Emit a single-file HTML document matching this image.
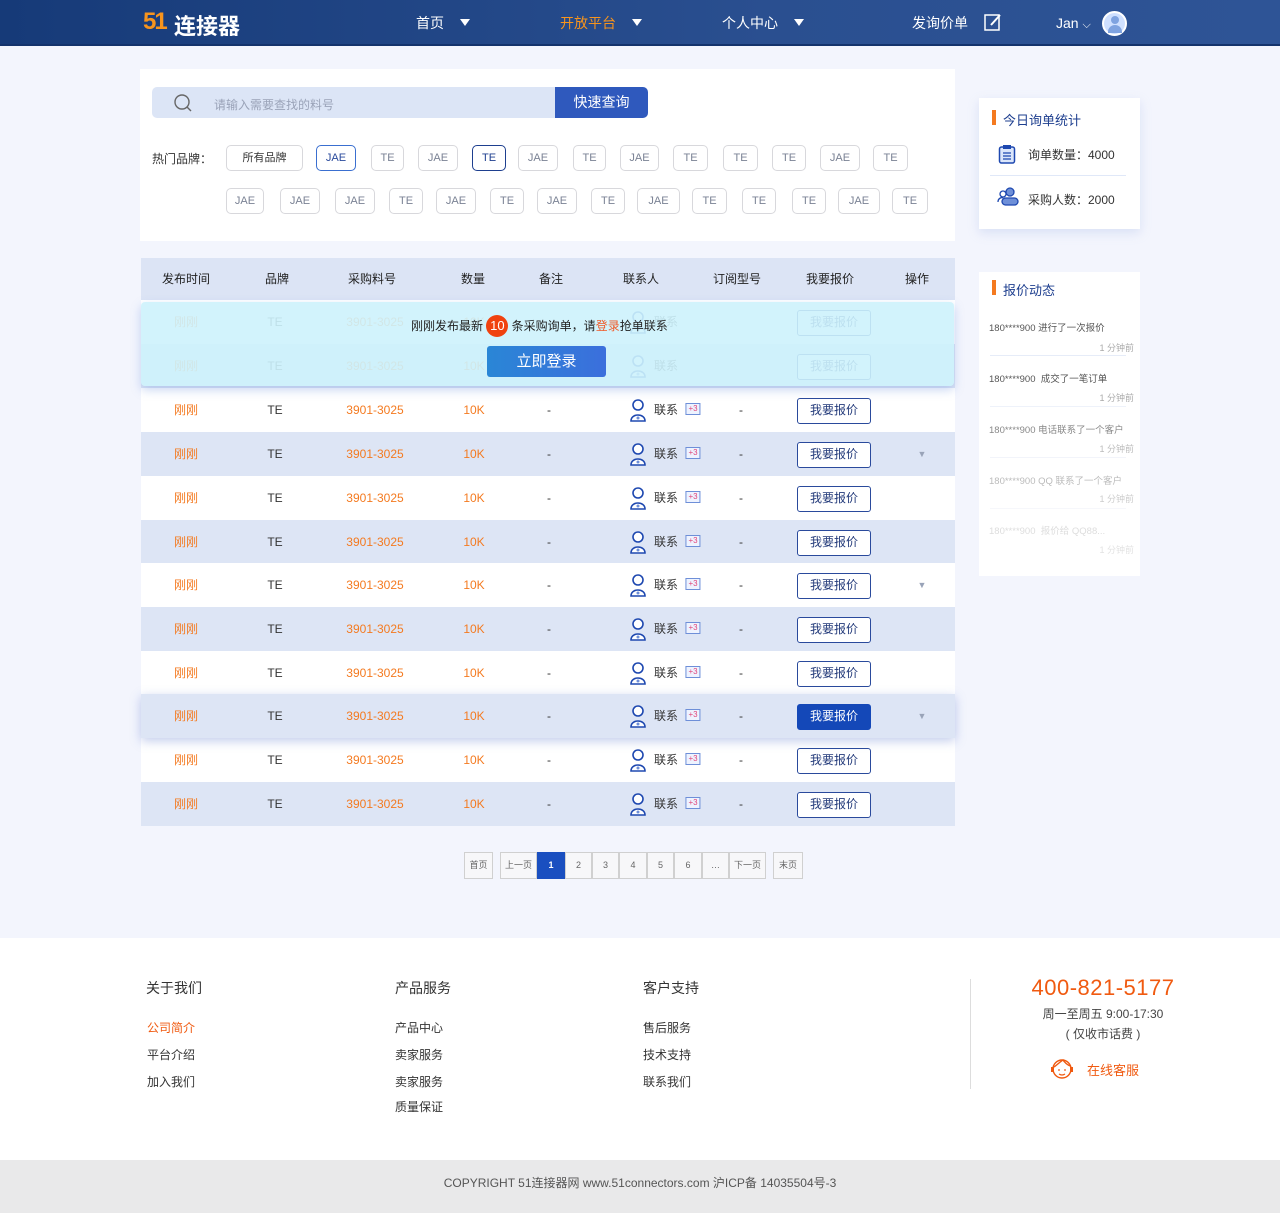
<!DOCTYPE html>
<html><head><meta charset="utf-8"><style>
*{margin:0;padding:0;box-sizing:border-box}
body{width:1280px;height:1213px;background:#f3f5fd;font-family:"Liberation Sans","Noto Sans CJK SC",sans-serif;position:relative;overflow:hidden;font-size:12px;color:#333}
.a{position:absolute}
.hdr{left:0;top:0;width:1280px;height:46px;background:linear-gradient(90deg,#163a78,#2a4f90 60%,#2e5496);border-bottom:2px solid #14336c}
.nav{color:#fff;font-size:14px;top:13px}
.tri{display:inline-block;width:0;height:0;border-left:5px solid transparent;border-right:5px solid transparent;border-top:7px solid #fff;margin-left:16px;vertical-align:2px}
.card{background:#fff}
.tag{position:absolute;height:26px;border:1px solid #d8d8dc;border-radius:5px;font-size:11px;color:#7a8294;text-align:center;line-height:24px;background:#fff}
.row{position:absolute;left:141px;width:814px;height:44px;font-size:12px}
.row span{position:absolute;top:0;line-height:44px;transform:translateX(-50%)}
.o{color:#f47a20}
.btn{position:absolute;left:656px;top:10px;width:74px;height:26px;border:1.5px solid #2a4a9c;border-radius:3px;color:#233a7a;text-align:center;line-height:23px;font-size:12px;background:#fff}
.pg{position:absolute;top:852px;height:27px;border:1px solid #d0d0d0;background:#f7f7f9;font-size:9px;color:#666;text-align:center;line-height:25px}
.fh{font-size:14px;color:#333;top:978px}
.fl{font-size:12px;color:#333}
.dyn{position:absolute;left:989px;width:145px;font-size:9.5px;color:#555;white-space:nowrap}
</style></head><body>
<div class="a hdr"></div>
<div class="a" style="left:143px;top:8px;font-size:24px;font-weight:bold;color:#f7941d;letter-spacing:-2px">51</div>
<div class="a" style="left:174px;top:9px;font-size:22px;color:#fff;font-weight:bold">连接器</div>
<div class="a nav" style="left:416px">首页<span class="tri"></span></div>
<div class="a nav" style="left:560px;color:#f7941d">开放平台<span class="tri"></span></div>
<div class="a nav" style="left:722px">个人中心<span class="tri"></span></div>
<div class="a nav" style="left:912px">发询价单</div>
<svg class="a" style="left:984px;top:13px" width="18" height="18" viewBox="0 0 18 18"><rect x="1" y="2" width="14" height="15" fill="none" stroke="#fff" stroke-width="1.5"/><path d="M7 12 L16 2" stroke="#fff" stroke-width="2"/></svg>
<div class="a nav" style="left:1056px;top:15px">Jan <span style="font-size:11px">⌵</span></div>
<div class="a" style="left:1102px;top:11px;width:25px;height:25px;border-radius:50%;background:#cfe0ff;border:2px solid #fff"><div class="a" style="left:7px;top:3px;width:8px;height:8px;border-radius:50%;background:#7fa3e0"></div><div class="a" style="left:4px;top:12px;width:14px;height:8px;border-radius:7px 7px 0 0;background:#7fa3e0"></div></div>

<div class="a card" style="left:140px;top:69px;width:815px;height:172px"></div>
<div class="a" style="left:152px;top:87px;width:404px;height:31px;background:#dce5f6;border-radius:5px 0 0 5px"></div>
<svg class="a" style="left:173px;top:93px" width="20" height="20" viewBox="0 0 20 20"><circle cx="9" cy="9" r="7" fill="none" stroke="#666" stroke-width="1.4"/><path d="M14 14 L18 18" stroke="#666" stroke-width="1.4"/></svg>
<div class="a" style="left:214px;top:96px;color:#9aa3b8;font-size:12px">请输入需要查找的料号</div>
<div class="a" style="left:555px;top:87px;width:93px;height:31px;background:#2f59bd;border-radius:0 5px 5px 0;color:#fff;font-size:14px;text-align:center;line-height:31px">快速查询</div>
<div class="a" style="left:152px;top:150px;font-size:12px">热门品牌：</div>
<div class="tag" style="left:226px;top:145px;width:77px;color:#333">所有品牌</div>
<div class="tag" style="left:316px;top:145px;width:40px;border-color:#3a6fd0;color:#2a4a9c">JAE</div>
<div class="tag" style="left:371px;top:145px;width:33px">TE</div>
<div class="tag" style="left:418px;top:145px;width:40px">JAE</div>
<div class="tag" style="left:472px;top:145px;width:34px;border-color:#1e3f8f;color:#1e3f8f">TE</div>
<div class="tag" style="left:518px;top:145px;width:40px">JAE</div>
<div class="tag" style="left:573px;top:145px;width:33px">TE</div>
<div class="tag" style="left:620px;top:145px;width:39px">JAE</div>
<div class="tag" style="left:673px;top:145px;width:35px">TE</div>
<div class="tag" style="left:723px;top:145px;width:35px">TE</div>
<div class="tag" style="left:772px;top:145px;width:34px">TE</div>
<div class="tag" style="left:820px;top:145px;width:40px">JAE</div>
<div class="tag" style="left:873px;top:145px;width:35px">TE</div>
<div class="tag" style="left:226px;top:188px;width:38px">JAE</div>
<div class="tag" style="left:280px;top:188px;width:40px">JAE</div>
<div class="tag" style="left:335px;top:188px;width:40px">JAE</div>
<div class="tag" style="left:389px;top:188px;width:34px">TE</div>
<div class="tag" style="left:436px;top:188px;width:40px">JAE</div>
<div class="tag" style="left:490px;top:188px;width:34px">TE</div>
<div class="tag" style="left:537px;top:188px;width:40px">JAE</div>
<div class="tag" style="left:591px;top:188px;width:34px">TE</div>
<div class="tag" style="left:637px;top:188px;width:43px">JAE</div>
<div class="tag" style="left:692px;top:188px;width:35px">TE</div>
<div class="tag" style="left:742px;top:188px;width:34px">TE</div>
<div class="tag" style="left:792px;top:188px;width:34px">TE</div>
<div class="tag" style="left:838px;top:188px;width:42px">JAE</div>
<div class="tag" style="left:892px;top:188px;width:36px">TE</div>

<!-- table -->
<div class="row" style="top:258px;height:42px;background:#dce4f5;color:#222"><span style="left:45px;line-height:42px">发布时间</span><span style="left:136px;line-height:42px">品牌</span><span style="left:231px;line-height:42px">采购料号</span><span style="left:332px;line-height:42px">数量</span><span style="left:410px;line-height:42px">备注</span><span style="left:500px;line-height:42px">联系人</span><span style="left:596px;line-height:42px">订阅型号</span><span style="left:689px;line-height:42px">我要报价</span><span style="left:776px;line-height:42px">操作</span></div>

<svg width="0" height="0" style="position:absolute"><defs><g id="p"><circle cx="8" cy="6" r="5" fill="#fff" stroke="#1e48b0" stroke-width="1.6"/><path d="M1 22 C1 14 15 14 15 22 Z" fill="#fff" stroke="#1e48b0" stroke-width="1.6"/><circle cx="8" cy="19" r="1.5" fill="#6e8fd8"/></g></defs></svg>

<div class="row" style="top:300px;background:#fff"><span class="o" style="left:45px">刚刚</span><span style="left:134px">TE</span><span class="o" style="left:234px">3901-3025</span><span class="o" style="left:333px">10K</span><span style="left:408px">-</span><svg class="a" style="left:489px;top:11px" width="17" height="24"><use href="#p"/></svg><span style="left:525px">联系</span><div class="btn">我要报价</div></div>
<div class="row" style="top:344px;background:#dde5f5"><span class="o" style="left:45px">刚刚</span><span style="left:134px">TE</span><span class="o" style="left:234px">3901-3025</span><span class="o" style="left:333px">10K</span><span style="left:408px">-</span><svg class="a" style="left:489px;top:11px" width="17" height="24"><use href="#p"/></svg><span style="left:525px">联系</span><div class="btn">我要报价</div></div>
<div class="row" style="top:388px;background:#fff"><span class="o" style="left:45px">刚刚</span><span style="left:134px">TE</span><span class="o" style="left:234px">3901-3025</span><span class="o" style="left:333px">10K</span><span style="left:408px">-</span><svg class="a" style="left:489px;top:11px" width="17" height="24"><use href="#p"/></svg><span style="left:525px">联系</span><span style="left:552px;color:#e0457a;font-size:8px;top:-1px;border:1px solid #6e8fd8;line-height:10px;padding:0 2px;margin-top:16px;background:#eef3ff">+3</span><span style="left:600px">-</span><div class="btn">我要报价</div></div>
<div class="row" style="top:432px;background:#dde5f5"><span class="o" style="left:45px">刚刚</span><span style="left:134px">TE</span><span class="o" style="left:234px">3901-3025</span><span class="o" style="left:333px">10K</span><span style="left:408px">-</span><svg class="a" style="left:489px;top:11px" width="17" height="24"><use href="#p"/></svg><span style="left:525px">联系</span><span style="left:552px;color:#e0457a;font-size:8px;top:-1px;border:1px solid #6e8fd8;line-height:10px;padding:0 2px;margin-top:16px;background:#eef3ff">+3</span><span style="left:600px">-</span><div class="btn">我要报价</div><span style="left:781px;color:#99a3b8;font-size:9px">▼</span></div>
<div class="row" style="top:476px;background:#fff"><span class="o" style="left:45px">刚刚</span><span style="left:134px">TE</span><span class="o" style="left:234px">3901-3025</span><span class="o" style="left:333px">10K</span><span style="left:408px">-</span><svg class="a" style="left:489px;top:11px" width="17" height="24"><use href="#p"/></svg><span style="left:525px">联系</span><span style="left:552px;color:#e0457a;font-size:8px;top:-1px;border:1px solid #6e8fd8;line-height:10px;padding:0 2px;margin-top:16px;background:#eef3ff">+3</span><span style="left:600px">-</span><div class="btn">我要报价</div></div>
<div class="row" style="top:520px;background:#dde5f5"><span class="o" style="left:45px">刚刚</span><span style="left:134px">TE</span><span class="o" style="left:234px">3901-3025</span><span class="o" style="left:333px">10K</span><span style="left:408px">-</span><svg class="a" style="left:489px;top:11px" width="17" height="24"><use href="#p"/></svg><span style="left:525px">联系</span><span style="left:552px;color:#e0457a;font-size:8px;top:-1px;border:1px solid #6e8fd8;line-height:10px;padding:0 2px;margin-top:16px;background:#eef3ff">+3</span><span style="left:600px">-</span><div class="btn">我要报价</div></div>
<div class="row" style="top:563px;background:#fff"><span class="o" style="left:45px">刚刚</span><span style="left:134px">TE</span><span class="o" style="left:234px">3901-3025</span><span class="o" style="left:333px">10K</span><span style="left:408px">-</span><svg class="a" style="left:489px;top:11px" width="17" height="24"><use href="#p"/></svg><span style="left:525px">联系</span><span style="left:552px;color:#e0457a;font-size:8px;top:-1px;border:1px solid #6e8fd8;line-height:10px;padding:0 2px;margin-top:16px;background:#eef3ff">+3</span><span style="left:600px">-</span><div class="btn">我要报价</div><span style="left:781px;color:#99a3b8;font-size:9px">▼</span></div>
<div class="row" style="top:607px;background:#dde5f5"><span class="o" style="left:45px">刚刚</span><span style="left:134px">TE</span><span class="o" style="left:234px">3901-3025</span><span class="o" style="left:333px">10K</span><span style="left:408px">-</span><svg class="a" style="left:489px;top:11px" width="17" height="24"><use href="#p"/></svg><span style="left:525px">联系</span><span style="left:552px;color:#e0457a;font-size:8px;top:-1px;border:1px solid #6e8fd8;line-height:10px;padding:0 2px;margin-top:16px;background:#eef3ff">+3</span><span style="left:600px">-</span><div class="btn">我要报价</div></div>
<div class="row" style="top:651px;background:#fff"><span class="o" style="left:45px">刚刚</span><span style="left:134px">TE</span><span class="o" style="left:234px">3901-3025</span><span class="o" style="left:333px">10K</span><span style="left:408px">-</span><svg class="a" style="left:489px;top:11px" width="17" height="24"><use href="#p"/></svg><span style="left:525px">联系</span><span style="left:552px;color:#e0457a;font-size:8px;top:-1px;border:1px solid #6e8fd8;line-height:10px;padding:0 2px;margin-top:16px;background:#eef3ff">+3</span><span style="left:600px">-</span><div class="btn">我要报价</div></div>
<div class="row" style="top:694px;background:#dde5f5;box-shadow:0 3px 10px rgba(80,110,200,.35);z-index:2"><span class="o" style="left:45px">刚刚</span><span style="left:134px">TE</span><span class="o" style="left:234px">3901-3025</span><span class="o" style="left:333px">10K</span><span style="left:408px">-</span><svg class="a" style="left:489px;top:11px" width="17" height="24"><use href="#p"/></svg><span style="left:525px">联系</span><span style="left:552px;color:#e0457a;font-size:8px;top:-1px;border:1px solid #6e8fd8;line-height:10px;padding:0 2px;margin-top:16px;background:#eef3ff">+3</span><span style="left:600px">-</span><div class="btn" style="background:#1448b8;color:#fff;border-color:#1448b8">我要报价</div><span style="left:781px;color:#99a3b8;font-size:9px">▼</span></div>
<div class="row" style="top:738px;background:#fff"><span class="o" style="left:45px">刚刚</span><span style="left:134px">TE</span><span class="o" style="left:234px">3901-3025</span><span class="o" style="left:333px">10K</span><span style="left:408px">-</span><svg class="a" style="left:489px;top:11px" width="17" height="24"><use href="#p"/></svg><span style="left:525px">联系</span><span style="left:552px;color:#e0457a;font-size:8px;top:-1px;border:1px solid #6e8fd8;line-height:10px;padding:0 2px;margin-top:16px;background:#eef3ff">+3</span><span style="left:600px">-</span><div class="btn">我要报价</div></div>
<div class="row" style="top:782px;background:#dde5f5"><span class="o" style="left:45px">刚刚</span><span style="left:134px">TE</span><span class="o" style="left:234px">3901-3025</span><span class="o" style="left:333px">10K</span><span style="left:408px">-</span><svg class="a" style="left:489px;top:11px" width="17" height="24"><use href="#p"/></svg><span style="left:525px">联系</span><span style="left:552px;color:#e0457a;font-size:8px;top:-1px;border:1px solid #6e8fd8;line-height:10px;padding:0 2px;margin-top:16px;background:#eef3ff">+3</span><span style="left:600px">-</span><div class="btn">我要报价</div></div>

<!-- overlay -->
<div class="a" style="left:141px;top:302px;width:813px;height:84px;background:rgba(205,242,252,.9);border-radius:4px;box-shadow:0 4px 10px rgba(100,140,220,.35);z-index:3"></div>
<div class="a" style="left:411px;top:315px;z-index:4;font-size:12px;color:#222;line-height:18px">刚刚发布最新 <span style="display:inline-block;width:22px;height:22px;border-radius:50%;background:#f0420f;color:#fff;text-align:center;line-height:22px;font-size:13px">10</span> 条采购询单，请<span style="color:#f05a28">登录</span>抢单联系</div>
<div class="a" style="left:487px;top:346px;width:119px;height:31px;background:linear-gradient(90deg,#2a86d6,#3b6fdc);border-radius:3px;color:#fff;font-size:15px;text-align:center;line-height:31px;z-index:4">立即登录</div>

<!-- pagination -->
<div class="pg" style="left:464px;width:29px">首页</div>
<div class="pg" style="left:500px;width:37px">上一页</div>
<div class="pg" style="left:537px;width:28px;background:#1a4fc0;color:#fff;border-color:#1a4fc0;font-weight:bold">1</div>
<div class="pg" style="left:565px;width:27px">2</div>
<div class="pg" style="left:592px;width:27px">3</div>
<div class="pg" style="left:619px;width:28px">4</div>
<div class="pg" style="left:647px;width:27px">5</div>
<div class="pg" style="left:674px;width:28px">6</div>
<div class="pg" style="left:702px;width:27px">…</div>
<div class="pg" style="left:729px;width:37px">下一页</div>
<div class="pg" style="left:773px;width:30px">末页</div>

<!-- right -->
<div class="a card" style="left:979px;top:98px;width:161px;height:131px;box-shadow:0 4px 10px rgba(160,180,230,.3)"></div>
<div class="a" style="left:992px;top:110px;width:4px;height:15px;background:#f47a20"></div>
<div class="a" style="left:1003px;top:110px;font-size:13px;color:#1e3f8f">今日询单统计</div>
<svg class="a" style="left:998px;top:144px" width="18" height="20"><rect x="1.5" y="3" width="15" height="16" rx="2" fill="#dbe6fb" stroke="#1e48b0" stroke-width="1.5"/><rect x="5" y="1" width="8" height="4" fill="#1e48b0"/><path d="M5 9h8M5 12h8M5 15h8" stroke="#1e48b0" stroke-width="1.2"/></svg>
<div class="a" style="left:1028px;top:146px;font-size:12px">询单数量：4000</div>
<div class="a" style="left:990px;top:175px;width:136px;height:1px;background:#e0e8f8"></div>
<svg class="a" style="left:997px;top:187px" width="22" height="20"><circle cx="13" cy="5" r="4" fill="#6e8fd8" stroke="#1e48b0" stroke-width="1.3"/><rect x="5" y="11" width="16" height="7" rx="3.5" fill="#6e8fd8" stroke="#1e48b0" stroke-width="1.3"/><circle cx="6" cy="7" r="3" fill="#fff" stroke="#1e48b0" stroke-width="1.3"/><path d="M1 15 C1 11 5 10 6 11" fill="none" stroke="#1e48b0" stroke-width="1.3"/></svg>
<div class="a" style="left:1028px;top:191px;font-size:12px">采购人数：2000</div>

<div class="a card" style="left:979px;top:272px;width:161px;height:304px"></div>
<div class="a" style="left:992px;top:280px;width:4px;height:15px;background:#f47a20"></div>
<div class="a" style="left:1003px;top:280px;font-size:13px;color:#1e3f8f">报价动态</div>
<div class="dyn" style="top:320px;color:#555">180****900 进行了一次报价</div><div class="dyn" style="top:341px;text-align:right;font-size:9px;color:#aaa">1 分钟前</div><div class="a" style="left:990px;top:355px;width:136px;height:1px;background:#e6ecf8"></div>
<div class="dyn" style="top:371px;color:#555">180****900&nbsp; 成交了一笔订单</div><div class="dyn" style="top:391px;text-align:right;font-size:9px;color:#aaa">1 分钟前</div><div class="a" style="left:990px;top:406px;width:136px;height:1px;background:#eef2fa"></div>
<div class="dyn" style="top:422px;color:#888">180****900 电话联系了一个客户</div><div class="dyn" style="top:442px;text-align:right;font-size:9px;color:#bbb">1 分钟前</div><div class="a" style="left:990px;top:457px;width:136px;height:1px;background:#f2f4fa"></div>
<div class="dyn" style="top:473px;color:#bbb">180****900 QQ 联系了一个客户</div><div class="dyn" style="top:492px;text-align:right;font-size:9px;color:#ccc">1 分钟前</div><div class="a" style="left:990px;top:508px;width:136px;height:1px;background:#f6f7fb"></div>
<div class="dyn" style="top:523px;color:#ddd">180****900&nbsp; 报价给 QQ88...</div><div class="dyn" style="top:543px;text-align:right;font-size:9px;color:#e2e2e2">1 分钟前</div>

<!-- footer -->
<div class="a" style="left:0;top:938px;width:1280px;height:222px;background:#fff"></div>
<div class="a fh" style="left:146px">关于我们</div>
<div class="a fh" style="left:395px">产品服务</div>
<div class="a fh" style="left:643px">客户支持</div>
<div class="a fl" style="left:147px;top:1019px;color:#f05a10">公司简介</div>
<div class="a fl" style="left:147px;top:1046px">平台介绍</div>
<div class="a fl" style="left:147px;top:1073px">加入我们</div>
<div class="a fl" style="left:395px;top:1019px">产品中心</div>
<div class="a fl" style="left:395px;top:1046px">卖家服务</div>
<div class="a fl" style="left:395px;top:1073px">卖家服务</div>
<div class="a fl" style="left:395px;top:1098px">质量保证</div>
<div class="a fl" style="left:643px;top:1019px">售后服务</div>
<div class="a fl" style="left:643px;top:1046px">技术支持</div>
<div class="a fl" style="left:643px;top:1073px">联系我们</div>
<div class="a" style="left:970px;top:979px;width:1px;height:110px;background:#ddd"></div>
<div class="a" style="left:1030px;top:975px;width:146px;text-align:center;font-size:22px;color:#f05a10;letter-spacing:.5px">400-821-5177</div>
<div class="a" style="left:1030px;top:1005px;width:146px;text-align:center;font-size:12px;color:#444">周一至周五 9:00-17:30</div>
<div class="a" style="left:1030px;top:1025px;width:146px;text-align:center;font-size:12px;color:#444">( 仅收市话费 )</div>
<svg class="a" style="left:1049px;top:1055px" width="26" height="26" viewBox="0 0 26 26"><circle cx="13" cy="14" r="9" fill="none" stroke="#f05a10" stroke-width="1.4"/><path d="M5 12 C8 10 12 6 14 5 C16 8 19 10 21 11" fill="none" stroke="#f05a10" stroke-width="1.4"/><circle cx="10" cy="15" r=".9" fill="#f05a10"/><circle cx="16" cy="15" r=".9" fill="#f05a10"/><path d="M10 19 Q13 21 16 19" fill="none" stroke="#f05a10" stroke-width="1.2"/><rect x="2" y="12" width="3" height="5" fill="#f05a10"/><rect x="21" y="12" width="3" height="5" fill="#f05a10"/></svg>
<div class="a" style="left:1087px;top:1060px;font-size:13px;color:#f05a10">在线客服</div>
<div class="a" style="left:0;top:1160px;width:1280px;height:53px;background:#e9e9ea;text-align:center;line-height:46px;font-size:12px;color:#555">COPYRIGHT 51连接器网 www.51connectors.com 沪ICP备 14035504号-3</div>
</body></html>
